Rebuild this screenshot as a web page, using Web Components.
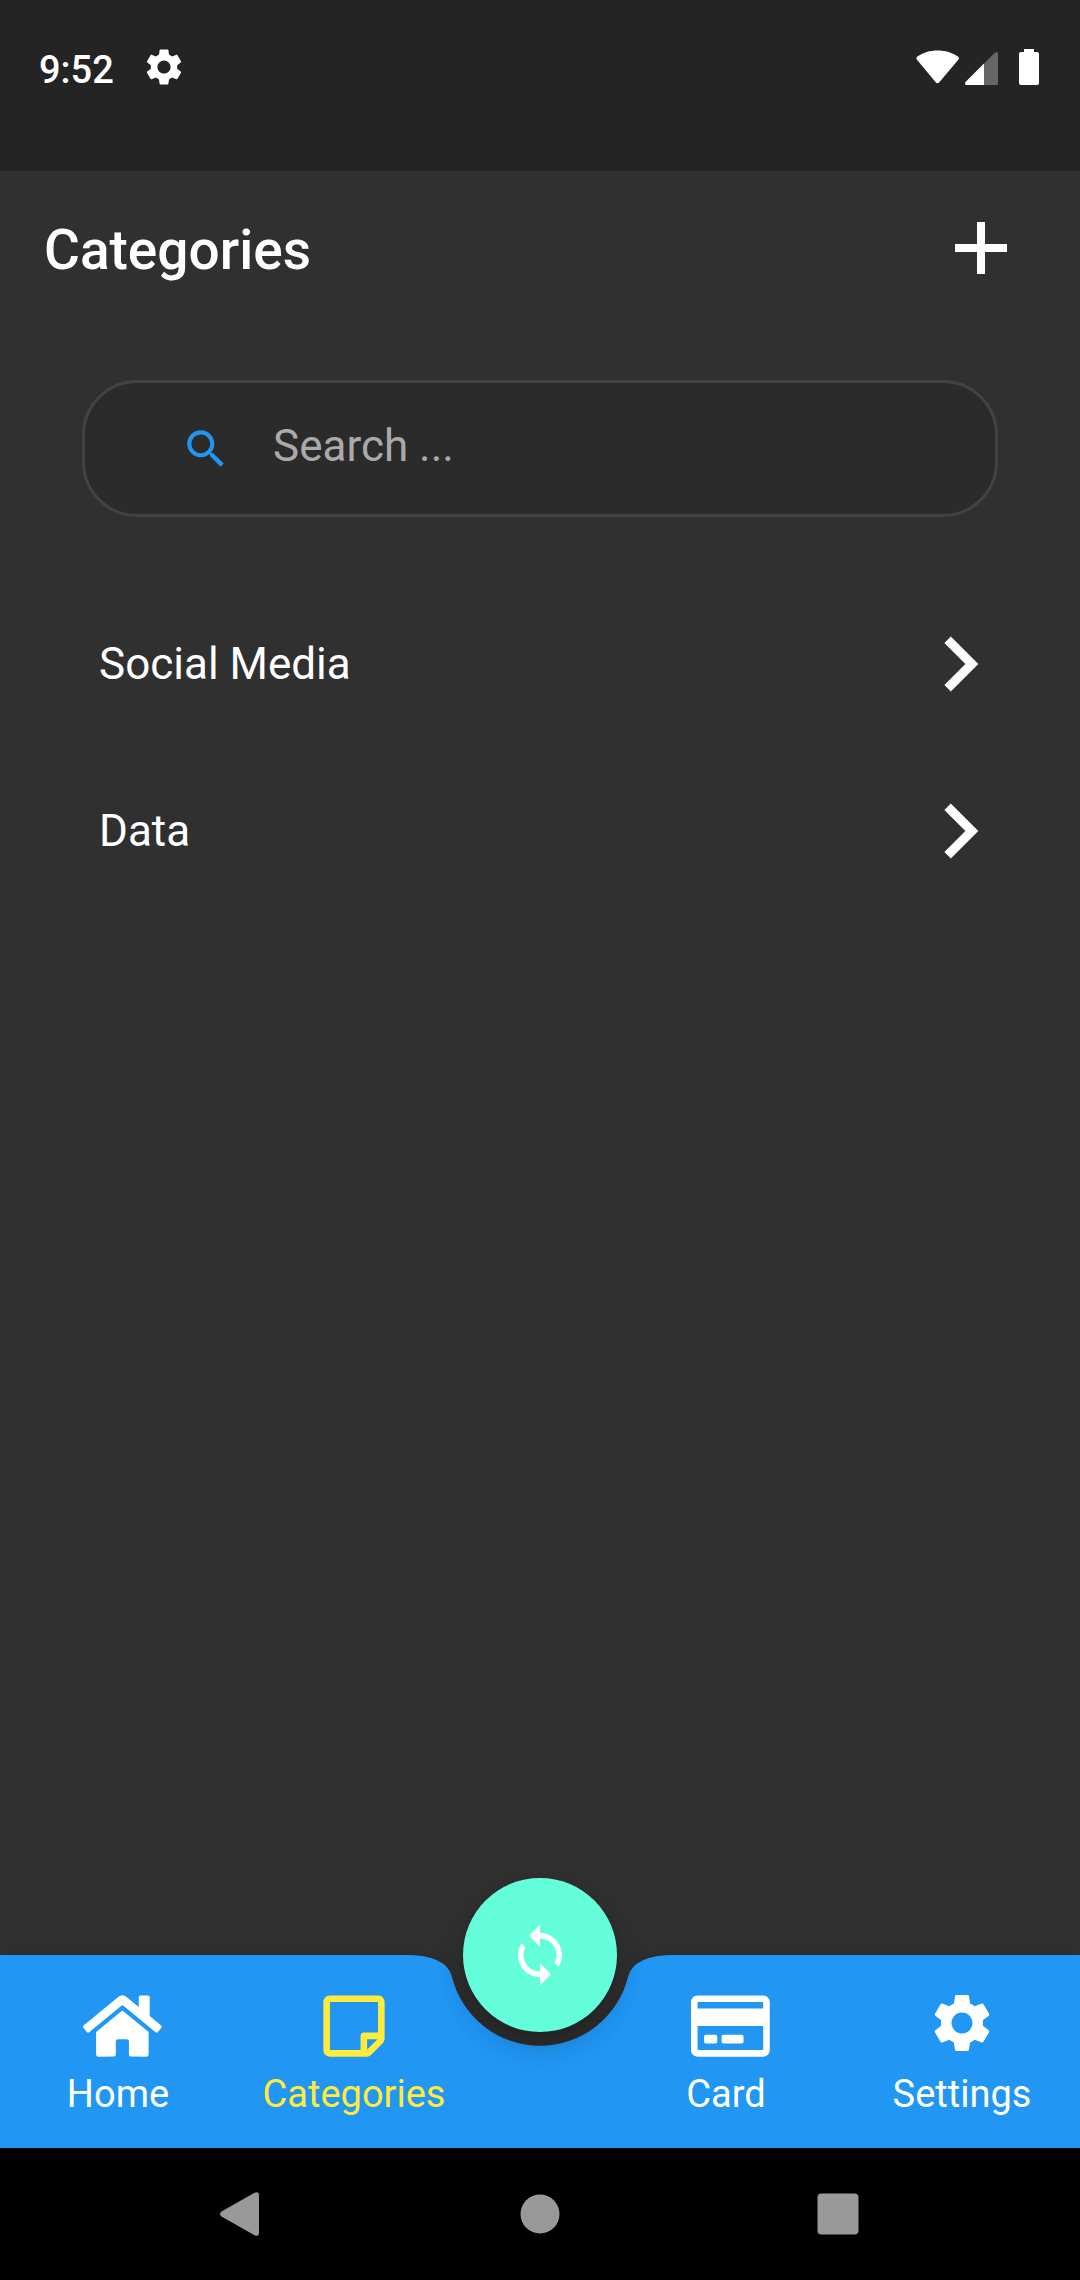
<!DOCTYPE html>
<html lang="en">
<head>
<meta charset="utf-8">
<meta name="viewport" content="width=device-width, initial-scale=1">
<title>Categories</title>
<style>
  html { background: #303030; }
  body { margin: 0; font-family: Roboto, "Noto Sans", sans-serif; color: #fff; }
</style>
</head>
<body>
<category-app>
  <status-bar slot="status" time="9:52"></status-bar>
  <app-header slot="header">Categories</app-header>
  <search-field placeholder="Search ..."></search-field>
  <category-list>
    <category-row href="#social-media">Social Media</category-row>
    <category-row href="#data">Data</category-row>
  </category-list>
  <tab-bar slot="tabs">
    <tab-item icon="home" href="#home">Home</tab-item>
    <tab-item icon="note" href="#categories" active>Categories</tab-item>
    <sync-button slot="action"></sync-button>
    <tab-item slot="end" icon="card" href="#card">Card</tab-item>
    <tab-item slot="end" icon="gear" href="#settings">Settings</tab-item>
  </tab-bar>
  <system-bar slot="system"></system-bar>
</category-app>

<script>
const GEAR = '<path d="M19.14,12.94c0.04-0.3,0.06-0.61,0.06-0.94c0-0.32-0.02-0.64-0.07-0.94l2.03-1.58c0.18-0.14,0.23-0.41,0.12-0.61l-1.92-3.32c-0.12-0.22-0.37-0.29-0.59-0.22l-2.39,0.96c-0.5-0.38-1.03-0.7-1.62-0.94L14.4,2.81c-0.04-0.24-0.24-0.41-0.48-0.41h-3.84c-0.24,0-0.43,0.17-0.47,0.41L9.25,5.35C8.66,5.59,8.12,5.92,7.63,6.29L5.24,5.33c-0.22-0.08-0.47,0-0.59,0.22L2.74,8.87C2.62,9.08,2.66,9.34,2.86,9.48l2.03,1.58C4.84,11.36,4.8,11.69,4.8,12s0.02,0.64,0.07,0.94l-2.03,1.58c-0.18,0.14-0.23,0.41-0.12,0.61l1.92,3.32c0.12,0.22,0.37,0.29,0.59,0.22l2.39-0.96c0.5,0.38,1.03,0.7,1.62,0.94l0.36,2.54c0.05,0.24,0.24,0.41,0.48,0.41h3.84c0.24,0,0.44-0.17,0.47-0.41l0.36-2.54c0.59-0.24,1.13-0.56,1.62-0.94l2.39,0.96c0.22,0.08,0.47,0,0.59-0.22l1.92-3.32c0.12-0.22,0.07-0.47-0.12-0.61L19.14,12.94z M12,15.6c-1.98,0-3.6-1.62-3.6-3.6s1.62-3.6,3.6-3.6s3.6,1.62,3.6,3.6S13.98,15.6,12,15.6z"/>';

const ICONS = {
  gear: ['0 0 24 24', GEAR],
  home: ['0 -22 512 512', '<path d="M280.37 148.26L96 300.11V464a16 16 0 0 0 16 16l112.06-.29a16 16 0 0 0 15.92-16V368a16 16 0 0 1 16-16h64a16 16 0 0 1 16 16v95.64a16 16 0 0 0 16 16.05L464 480a16 16 0 0 0 16-16V300L295.67 148.26a12.19 12.19 0 0 0-15.3 0zM571.6 251.47L488 182.56V44.05a12 12 0 0 0-12-12h-56a12 12 0 0 0-12 12v72.61L318.47 43a48 48 0 0 0-61 0L4.34 251.47a12 12 0 0 0-1.6 16.9l25.5 31A12 12 0 0 0 45.15 301l235.22-193.74a12.19 12.19 0 0 1 15.3 0L530.9 301a12 12 0 0 0 16.9-1.6l25.5-31a12 12 0 0 0-1.7-16.93z"/>'],
  note: ['-32 -22 512 512', '<path d="M448 348.106V80c0-26.51-21.49-48-48-48H48C21.49 32 0 53.49 0 80v351.988c0 26.51 21.49 48 48 48h268.118a48 48 0 0 0 33.941-14.059l83.882-83.882A48 48 0 0 0 448 348.106zm-128 80v-76.118h76.118L320 428.106zM400 80v223.988H296c-13.255 0-24 10.745-24 24v104H48V80h352z"/>'],
  card: ['0 -22 512 512', '<path d="M527.9 32H48.1C21.5 32 0 53.5 0 80v352c0 26.5 21.5 48 48.1 48h479.8c26.6 0 48.1-21.5 48.1-48V80c0-26.5-21.5-48-48.1-48zM54.1 80h467.8c3.3 0 6 2.7 6 6v42H48.1V86c0-3.3 2.7-6 6-6zm467.8 352H54.1c-3.3 0-6-2.7-6-6V256h479.8v170c0 3.3-2.7 6-6 6zM192 332v40c0 6.6-5.4 12-12 12h-72c-6.6 0-12-5.4-12-12v-40c0-6.6 5.4-12 12-12h72c6.6 0 12 5.4 12 12zm192 0v40c0 6.6-5.4 12-12 12H236c-6.6 0-12-5.4-12-12v-40c0-6.6 5.4-12 12-12h136c6.6 0 12 5.4 12 12z"/>']
};

const RESET = `
  :host, *, *::before, *::after { box-sizing: border-box; }
  svg { display: block; flex: none; fill: currentColor; }
  button { display: flex; align-items: center; justify-content: center; padding: 0; border: 0; background: none; color: inherit; font: inherit; cursor: pointer; }
  a { color: inherit; text-decoration: none; }
`;

function define(name, render) {
  customElements.define(name, class extends HTMLElement {
    constructor() {
      super();
      this.attachShadow({ mode: 'open' });
    }
    connectedCallback() {
      const { css, html } = render(this);
      this.shadowRoot.innerHTML = `<style>${RESET}${css}</style>${html}`;
    }
  });
}

define('category-app', () => ({
  css: `
    :host { display: flex; flex-direction: column; min-height: 100vh; background: #303030; }
    main { flex: 1; display: flex; flex-direction: column; gap: 63px; padding-top: 55px; }
  `,
  html: `
    <slot name="status"></slot>
    <slot name="header"></slot>
    <main><slot></slot></main>
    <slot name="tabs"></slot>
    <slot name="system"></slot>`
}));

define('status-bar', el => ({
  css: `
    :host { display: flex; justify-content: space-between; align-items: flex-start; height: 171px; padding: 45px 40px 0 39px; background: #242424; }
    .left { display: flex; align-items: flex-start; gap: 28px; font-size: 38px; line-height: 50px; font-weight: 500; }
  `,
  html: `
    <div class="left"><span>${el.getAttribute('time')}</span>
      <svg width="44" height="44" viewBox="0 0 24 24">${GEAR}</svg></div>
    <svg width="124" height="44" viewBox="916 45 124 44">
      <path d="M917.4 56.6C928 48.400 947 48.400 958 56.600Q959.600 58 958.300 59.800L939.300 82.300Q937.500 84.200 935.700 82.300L917 59.800Q915.700 58 917.400 56.600Z"/>
      <path d="M984 63.500V85H966.500Q964 84.500 965.500 82Z"/>
      <path d="M984 63.500L994.500 53Q998 50.500 998 54V83.500Q998 85 996.500 85H984Z" fill="#666"/>
      <path d="M1024 49H1034V52H1037Q1039 52 1039 54V83Q1039 85 1037 85H1021Q1019 85 1019 83V54Q1019 52 1021 52H1024Z"/>
    </svg>`
}));

define('app-header', () => ({
  css: `
    :host { display: flex; align-items: center; justify-content: space-between; height: 154px; padding: 0 44px; }
    h1 { margin: 0; padding-top: 4px; font-size: 55px; line-height: 64px; font-weight: 500; }
    button { width: 110px; height: 110px; }
  `,
  html: `
    <h1><slot></slot></h1>
    <button type="button" aria-label="Add category">
      <svg width="88" height="88" viewBox="0 0 88 88"><path d="M40 18h8v22h22v8H48v22h-8V48H18v-8h22z"/></svg>
    </button>`
}));

define('search-field', el => ({
  css: `
    :host { display: block; padding: 0 82px; }
    label { display: flex; align-items: center; gap: 42px; height: 137px; padding: 0 96px; border: 3px solid #434343; border-radius: 55px; background: #2b2b2b; }
    svg { color: #2196f3; }
    input { flex: 1; min-width: 0; margin: 0; padding: 0 0 5px; border: 0; outline: 0; background: none; color: #fff; font: inherit; font-size: 44px; line-height: 52px; }
    input::placeholder { color: #aaa; opacity: 1; }
  `,
  html: `
    <label>
      <svg width="50" height="50" viewBox="0 0 24 24"><path d="M15.500 14h-.79l-.28-.27C15.410 12.590 16 11.110 16 9.500 16 5.910 13.090 3 9.500 3S3 5.910 3 9.500 5.910 16 9.500 16c1.610 0 3.090-.59 4.230-1.570l.27.280v.790l5 4.990L20.490 19l-4.990-5zm-6 0C7.010 14 5 11.990 5 9.500S7.010 5 9.500 5 14 7.010 14 9.500 11.990 14 9.500 14z"/></svg>
      <input type="text" aria-label="Search" placeholder="${el.getAttribute('placeholder')}">
    </label>`
}));

define('category-list', () => ({
  css: `:host { display: flex; flex-direction: column; }`,
  html: `<slot></slot>`
}));

define('category-row', el => ({
  css: `
    :host { display: block; }
    a { display: flex; align-items: center; justify-content: space-between; height: 167px; padding: 0 65px 0 99px; font-size: 44px; line-height: 52px; }
  `,
  html: `
    <a href="${el.getAttribute('href')}"><span><slot></slot></span>
      <svg width="110" height="110" viewBox="0 0 24 24"><path d="M10 6L8.590 7.410 13.170 12l-4.580 4.590L10 18l6-6z"/></svg></a>`
}));

define('tab-bar', () => ({
  css: `
    :host { display: block; position: relative; --bar: #2196f3; }
    .shape { position: absolute; inset: 0; display: flex; filter: drop-shadow(0 0 8px rgba(0, 0, 0, .12)); }
    .shape span { flex: 1; background: var(--bar); }
    .shape svg { fill: var(--bar); }
    nav { position: relative; display: grid; grid-template-columns: 1fr 1fr 136px 1fr 1fr; height: 193px; }
    .action { position: relative; display: flex; justify-content: center; }
  `,
  html: `
    <div class="shape">
      <span></span>
      <svg width="272" height="193" viewBox="0 0 272 193"><path d="M0 0H1.250Q42.500 0 47.900 21.800A90.750 90.750 0 0 0 224.100 21.800Q229.500 0 270.750 0H272V193H0Z"/></svg>
      <span></span>
    </div>
    <nav aria-label="Main">
      <slot></slot>
      <div class="action"><slot name="action"></slot></div>
      <slot name="end"></slot>
    </nav>`
}));

define('tab-item', el => {
  const [box, shape] = ICONS[el.getAttribute('icon')];
  return {
    css: `
      :host { display: block; color: #fff; }
      :host([active]) { color: #ffeb3b; }
      a { display: flex; flex-direction: column; align-items: center; gap: 13px; padding-top: 33px; font-size: 38px; line-height: 46px; }
      svg { overflow: visible; }
    `,
    html: `<a href="${el.getAttribute('href')}"><svg width="70" height="70" viewBox="${box}">${shape}</svg><span><slot></slot></span></a>`
  };
});

define('sync-button', () => ({
  css: `
    :host { display: block; margin-top: -77px; }
    button { width: 154px; height: 154px; border-radius: 50%; background: #64ffda; color: #fff;
      box-shadow: 0 8px 14px -3px rgba(0, 0, 0, .12), 0 16px 27px rgba(0, 0, 0, .12), 0 3px 40px rgba(0, 0, 0, .06); }
  `,
  html: `
    <button type="button" aria-label="Sync">
      <svg width="66" height="66" viewBox="0 0 24 24"><path d="M12 4V1L8 5l4 4V6c3.310 0 6 2.690 6 6 0 1.010-.25 1.970-.7 2.800l1.460 1.460C19.540 15.030 20 13.570 20 12c0-4.420-3.580-8-8-8zm0 14c-3.310 0-6-2.690-6-6 0-1.010.25-1.970.7-2.800L5.240 7.740C4.460 8.970 4 10.430 4 12c0 4.420 3.580 8 8 8v3l4-4-4-4v3z"/></svg>
    </button>`
}));

define('system-bar', () => ({
  css: `
    :host { display: flex; position: relative; height: 132px; padding: 0 93px; background: #000; color: #999; }
    button { flex: 1; }
  `,
  html: `
    <button type="button" aria-label="Back"><svg width="48" height="48" viewBox="0 0 48 48"><path d="M3.500 21.500L36.500 2.800Q41 1 41 5V43Q41 47 36.500 45.200L3.500 26.500Q.5 24 3.500 21.500Z"/></svg></button>
    <button type="button" aria-label="Home"><svg width="48" height="48" viewBox="0 0 48 48"><circle cx="24" cy="24" r="19.500"/></svg></button>
    <button type="button" aria-label="Recent apps"><svg width="48" height="48" viewBox="0 0 48 48"><rect x="3.500" y="3.500" width="41" height="41" rx="4"/></svg></button>`
}));
</script>
</body>
</html>
